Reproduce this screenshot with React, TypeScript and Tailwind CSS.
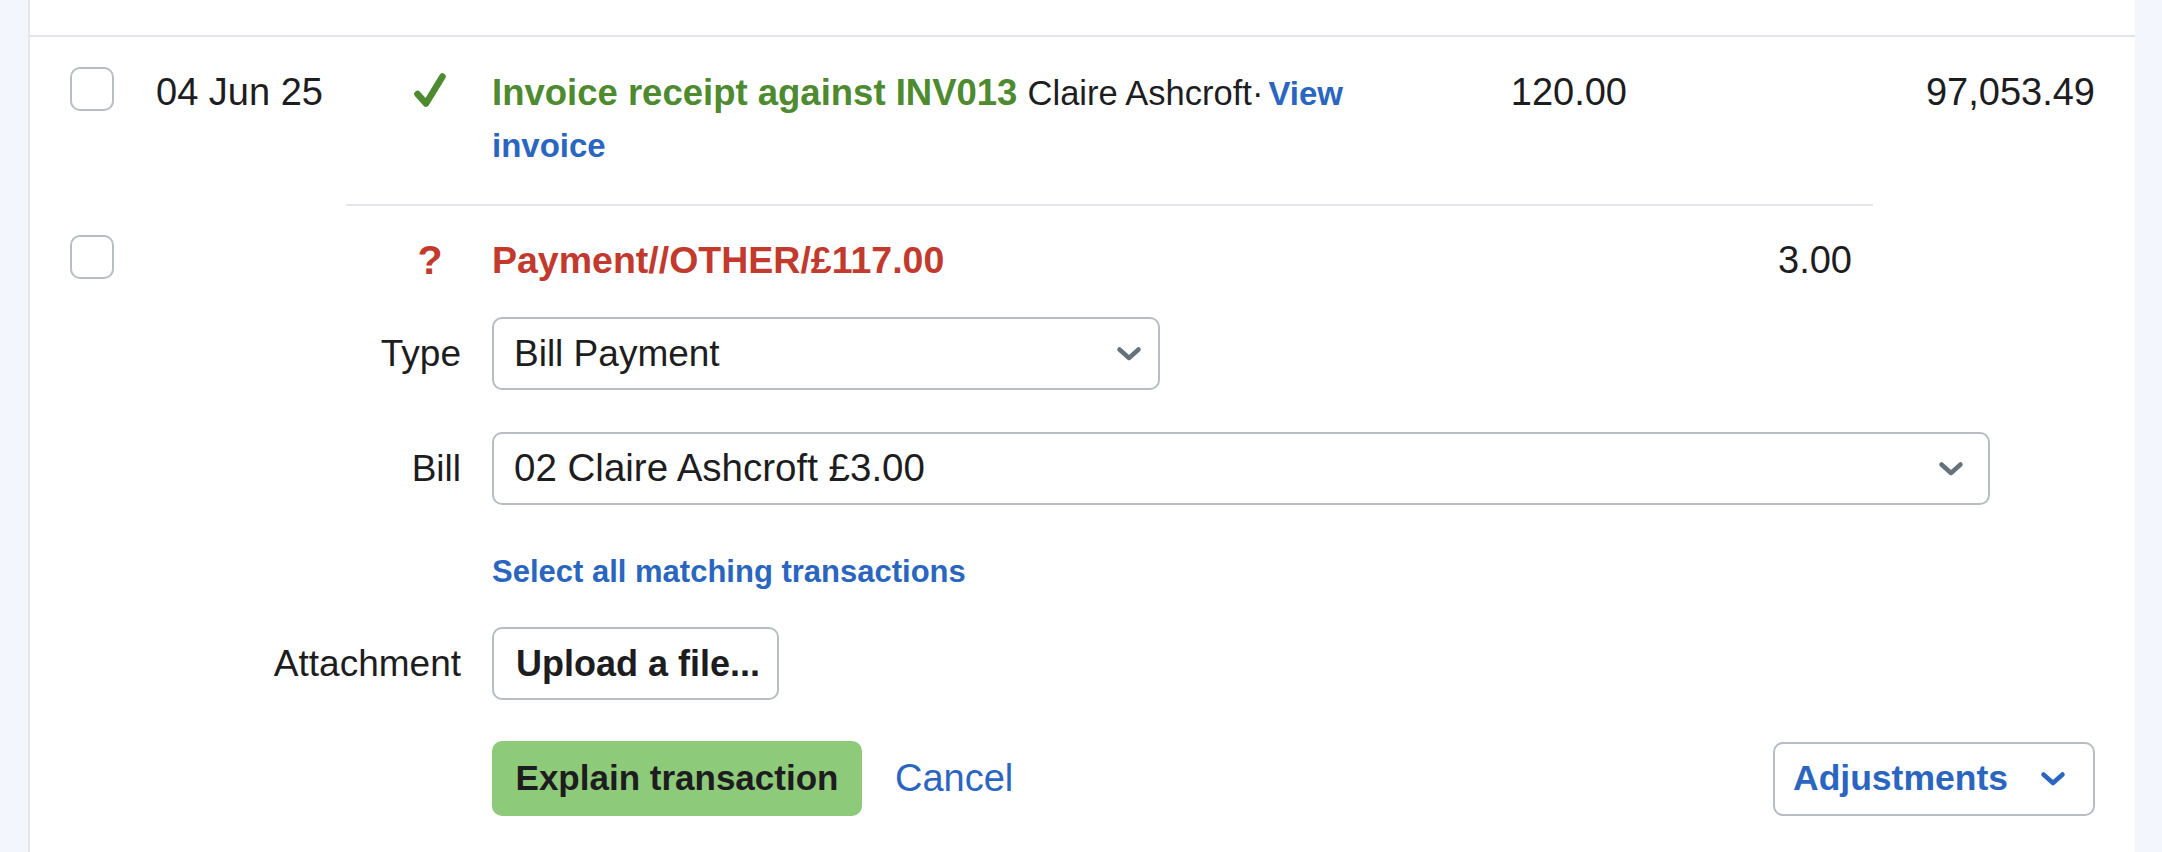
import React from 'react';

// Bank transaction explanation panel: one explained row, one unexplained row
// with its inline "explain" form open underneath.

function Checkbox() {
  return <div className="h-[44px] w-[44px] shrink-0 rounded-[10px] border-2 border-[#b9bec3] bg-white" />;
}

function Chevron({ className }: { className: string }) {
  return (
    <svg
      viewBox="0 0 26 16"
      className={className}
      fill="none"
      stroke="currentColor"
      strokeWidth={4.5}
      strokeLinecap="round"
      strokeLinejoin="round"
      aria-hidden="true"
    >
      <path d="M3.5 3.5 L13 12 L22.5 3.5" />
    </svg>
  );
}

function Tick() {
  return (
    <svg viewBox="0 0 34 36" className="mt-[5px] h-[36px] w-[34px]" fill="none" aria-hidden="true">
      <path
        d="M4.5 22 L13 31.5 L29.5 4.5"
        stroke="#4d8a30"
        strokeWidth={6.5}
        strokeLinecap="round"
        strokeLinejoin="round"
      />
    </svg>
  );
}

function FakeSelect({ value, width, pr, size }: { value: string; width: string; pr: string; size: string }) {
  return (
    <div
      className={`flex h-[73px] items-center justify-between rounded-[10px] border-2 border-[#b8bdc1] bg-white pl-[20px] ${width} ${pr}`}
    >
      <span className={`${size} leading-none`}>{value}</span>
      <Chevron className="h-[16px] w-[26px] text-[#66727b]" />
    </div>
  );
}

function FormRow({ label, children, className = '' }: { label: string; children: React.ReactNode; className?: string }) {
  return (
    <div className={`flex items-center ${className}`}>
      <div className="w-[431px] shrink-0 text-right text-[37px] leading-none">{label}</div>
      <div className="ml-[31px]">{children}</div>
    </div>
  );
}

export default function App() {
  return (
    <div className="flex min-h-screen bg-[#f3f6fc] font-['Liberation_Sans',Arial,sans-serif] text-[#1d1d1f]">
      <div className="ml-[28px] mr-[27px] h-[852px] flex-1 overflow-hidden border-l-2 border-[#e4e7ee] bg-white">
        {/* header strip above the rows */}
        <div className="h-[37px] border-b-2 border-[#e4e5ea]" />

        {/* explained row */}
        <div className="flex items-start pb-[33px] pl-[40px] pr-[40px] pt-[30px]">
          <Checkbox />
          <div className="ml-[42px] w-[244px] shrink-0 text-[38px] leading-[50px]">04 Jun 25</div>
          <div className="flex w-[60px] shrink-0 justify-center">
            <Tick />
          </div>
          <div className="ml-[32px] w-[908px] shrink-0 text-[36.5px] leading-[52px]">
            <span className="font-bold text-[#4d8a30]">Invoice receipt against INV013 </span>
            <span className="text-[34.5px] leading-none">Claire Ashcroft·</span>
            <a className="ml-[5px] text-[33px] font-bold leading-none text-[#2a66c0]">View</a>{' '}
            <a className="text-[33px] font-bold leading-none text-[#2a66c0]">invoice</a>
          </div>
          <div className="w-[227px] shrink-0 text-right text-[38px] leading-[50px]">120.00</div>
          <div className="w-[225px] shrink-0" />
          <div className="w-[243px] shrink-0 text-right text-[38px] leading-[50px]">97,053.49</div>
        </div>
        <div className="ml-[316px] h-[2px] w-[1527px] bg-[#e4e5ea]" />

        {/* unexplained row */}
        <div className="flex items-start pl-[40px] pr-[40px] pt-[29px]">
          <Checkbox />
          <div className="ml-[42px] w-[244px] shrink-0" />
          <div className="w-[60px] shrink-0 text-center text-[41px] font-bold leading-[50px] text-[#c23a2e]">?</div>
          <div className="ml-[32px] w-[908px] shrink-0 text-[37.5px] font-bold leading-[50px] text-[#c23a2e]">
            Payment//OTHER/£117.00
          </div>
          <div className="w-[227px] shrink-0" />
          <div className="w-[225px] shrink-0 text-right text-[38px] leading-[50px]">3.00</div>
          <div className="w-[243px] shrink-0" />
        </div>

        {/* explain form */}
        <div className="mt-[32px] flex flex-col pr-[40px]">
          <FormRow label="Type">
            <FakeSelect value="Bill Payment" width="w-[668px]" pr="pr-[16px]" size="text-[37px]" />
          </FormRow>
          <FormRow label="Bill" className="mt-[42px]">
            <FakeSelect value="02 Claire Ashcroft £3.00" width="w-[1498px]" pr="pr-[24px]" size="text-[38.5px]" />
          </FormRow>
          <a className="ml-[462px] mt-[43px] text-[31px] font-bold leading-[48px] text-[#2a66c0]">
            Select all matching transactions
          </a>
          <FormRow label="Attachment" className="mt-[31px]">
            <button
              type="button"
              className="flex h-[73px] w-[287px] items-center rounded-[10px] border-2 border-[#b8bdc1] bg-white pl-[22px] text-[36px] font-bold"
            >
              Upload a file...
            </button>
          </FormRow>
          <div className="ml-[462px] mt-[41px] flex items-center">
            <button
              type="button"
              className="flex h-[75px] w-[370px] items-center justify-center rounded-[10px] bg-[#8dca79] text-[35px] font-bold"
            >
              Explain transaction
            </button>
            <a className="ml-[33px] text-[38px] text-[#2a66c0]">Cancel</a>
            <button
              type="button"
              className="ml-auto flex h-[74px] w-[322px] items-center justify-between rounded-[10px] border-2 border-[#b8bdc1] bg-white pl-[18px] pr-[27px] text-[35.5px] font-bold text-[#2a66c0]"
            >
              Adjustments
              <Chevron className="h-[16px] w-[26px] text-[#2a66c0]" />
            </button>
          </div>
        </div>
      </div>
    </div>
  );
}
